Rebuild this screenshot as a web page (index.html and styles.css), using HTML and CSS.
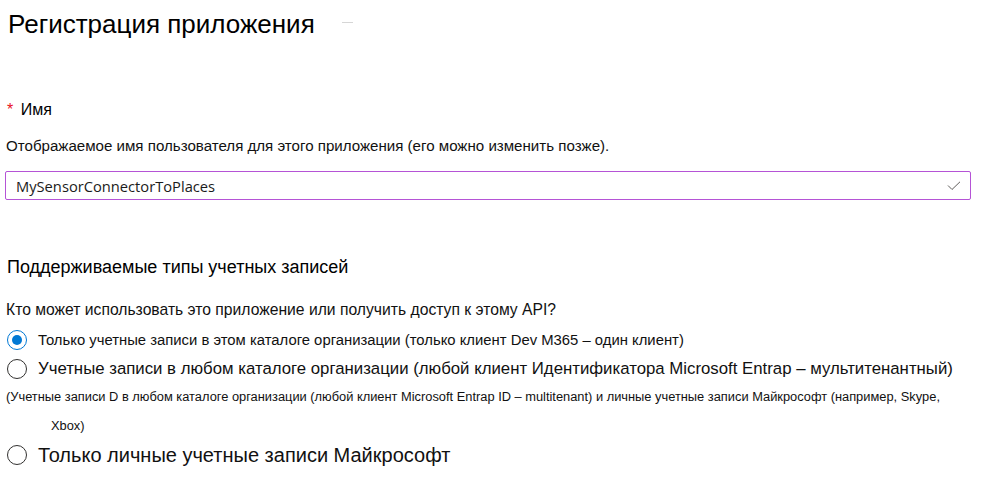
FILE: index.html
```html
<!DOCTYPE html>
<html lang="ru">
<head>
<meta charset="utf-8">
<title>Регистрация приложения</title>
<link rel="stylesheet" href="styles.css">
</head>
<body>
<div class="page">
  <h1 class="title">Регистрация приложения <span class="dash"></span></h1>

  <div class="field-label"><span class="req">*</span> Имя</div>
  <p class="desc">Отображаемое имя пользователя для этого приложения (его можно изменить позже).</p>
  <div class="input">
    <span class="input-text">MySensorConnectorToPlaces</span>
    <svg class="check" width="14" height="10" viewBox="0 0 14 10"><path d="M1 4.5 L5 8.5 L13 0.8" fill="none" stroke="#605e5c" stroke-width="1"/></svg>
  </div>

  <h2 class="section">Поддерживаемые типы учетных записей</h2>
  <p class="question">Кто может использовать это приложение или получить доступ к этому API?</p>

  <div class="radio-row r1">
    <span class="radio checked"></span>
    <span class="rlabel small">Только учетные записи в этом каталоге организации (только клиент Dev M365 – один клиент)</span>
  </div>
  <div class="radio-row r2">
    <span class="radio"></span>
    <span class="rlabel mid">Учетные записи в любом каталоге организации (любой клиент Идентификатора Microsoft Entrap – мультитенантный)</span>
  </div>
  <p class="note">(Учетные записи D в любом каталоге организации (любой клиент Microsoft Entrap ID – multitenant) и личные учетные записи Майкрософт (например, Skype,<br>Xbox)</p>
  <div class="radio-row r3">
    <span class="radio"></span>
    <span class="rlabel big">Только личные учетные записи Майкрософт</span>
  </div>
</div>
</body>
</html>
```

FILE: styles.css
```css
html, body {
  margin: 0;
  padding: 0;
  background: #ffffff;
}
body {
  font-family: "Liberation Sans", Arial, sans-serif;
  color: #111111;
}
.page {
  padding: 8px 0 0 0;
  width: 1000px;
}
.title {
  margin: 0 0 0 8px;
  font-size: 26px;
  font-weight: 400;
  line-height: 32px;
  color: #000;
  display: flex;
  align-items: center;
  gap: 27px;
}
.dash {
  display: inline-block;
  width: 11px;
  height: 1px;
  background: #d6d6d6;
  margin-top: -4px;
}
.field-label {
  margin: 60px 0 0 7px;
  font-size: 16px;
  line-height: 20px;
  color: #000;
}
.req {
  color: #e81123;
  margin-right: 3px;
}
.desc {
  margin: 16px 0 0 6px;
  font-size: 15.1px;
  line-height: 20px;
}
.input {
  margin: 15px 0 0 5px;
  width: 966px;
  height: 29px;
  box-sizing: border-box;
  border: 1px solid #b553d6;
  border-radius: 2px;
  display: flex;
  align-items: center;
  justify-content: space-between;
  padding: 0 9px 0 10px;
}
.input-text {
  font-family: "Open Sans", "Liberation Sans", sans-serif;
  font-size: 14.7px;
  color: #1b1b1b;
}
.section {
  margin: 56px 0 0 7px;
  font-size: 18px;
  font-weight: 400;
  line-height: 22px;
  color: #000;
}
.question {
  margin: 22px 0 0 6px;
  font-size: 15.7px;
  line-height: 20px;
}
.radio-row {
  display: flex;
  align-items: center;
  gap: 11px;
  margin-left: 7px;
}
.r1 { margin-top: 10px; height: 20px; }
.r2 { margin-top: 9px; height: 20px; }
.r3 { margin-top: 3px; height: 24px; }
.radio {
  width: 20px;
  height: 20px;
  box-sizing: border-box;
  border: 1px solid #323130;
  border-radius: 50%;
  flex: none;
  display: flex;
  align-items: center;
  justify-content: center;
}
.radio.checked {
  border-color: #0078d4;
}
.radio.checked::after {
  content: "";
  width: 10px;
  height: 10px;
  border-radius: 50%;
  background: #0078d4;
}
.rlabel.small { font-size: 14.85px; }
.rlabel.mid { font-size: 16.8px; }
.rlabel.big { font-size: 20px; }
.note {
  margin: 3px 0 0 0;
  padding-left: 51px;
  text-indent: -45px;
  font-size: 12.85px;
  line-height: 29px;
}
```
